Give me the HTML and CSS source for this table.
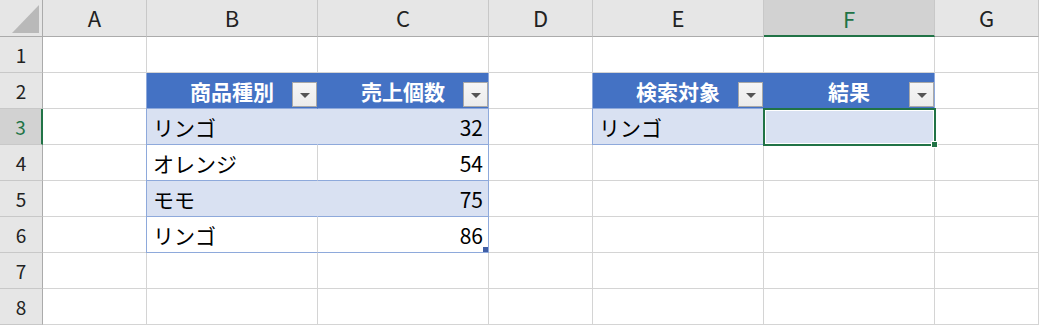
FILE: index.html
```html
<!DOCTYPE html>
<html lang="ja">
<head>
<meta charset="utf-8">
<link rel="stylesheet" href="styles.css">
</head>
<body>
<div class="sheet">
  <div class="corner"><span class="tri"></span></div>
  <div class="colhead">A</div>
  <div class="colhead">B</div>
  <div class="colhead">C</div>
  <div class="colhead">D</div>
  <div class="colhead">E</div>
  <div class="colhead sel">F</div>
  <div class="colhead">G</div>

  <div class="rowhead">1</div>
  <div class="cell"></div><div class="cell"></div><div class="cell"></div><div class="cell"></div><div class="cell"></div><div class="cell"></div><div class="cell"></div>

  <div class="rowhead">2</div>
  <div class="cell"></div>
  <div class="cell th first">商品種別<span class="filter"><span class="arrow"></span></span></div>
  <div class="cell th last">売上個数<span class="filter"><span class="arrow"></span></span></div>
  <div class="cell"></div>
  <div class="cell th first">検索対象<span class="filter"><span class="arrow"></span></span></div>
  <div class="cell th last">結果<span class="filter"><span class="arrow"></span></span></div>
  <div class="cell"></div>

  <div class="rowhead sel">3</div>
  <div class="cell"></div>
  <div class="cell td band first">リンゴ</div>
  <div class="cell td band last num">32</div>
  <div class="cell"></div>
  <div class="cell td band first">リンゴ</div>
  <div class="cell td band last active"><span class="selbox"><span class="handle"></span></span></div>
  <div class="cell"></div>

  <div class="rowhead">4</div>
  <div class="cell"></div>
  <div class="cell td first">オレンジ</div>
  <div class="cell td last num">54</div>
  <div class="cell"></div><div class="cell"></div><div class="cell"></div><div class="cell"></div>

  <div class="rowhead">5</div>
  <div class="cell"></div>
  <div class="cell td band first">モモ</div>
  <div class="cell td band last num">75</div>
  <div class="cell"></div><div class="cell"></div><div class="cell"></div><div class="cell"></div>

  <div class="rowhead">6</div>
  <div class="cell"></div>
  <div class="cell td first">リンゴ</div>
  <div class="cell td last num">86<span class="resize"></span></div>
  <div class="cell"></div><div class="cell"></div><div class="cell"></div><div class="cell"></div>

  <div class="rowhead">7</div>
  <div class="cell"></div><div class="cell"></div><div class="cell"></div><div class="cell"></div><div class="cell"></div><div class="cell"></div><div class="cell"></div>

  <div class="rowhead">8</div>
  <div class="cell"></div><div class="cell"></div><div class="cell"></div><div class="cell"></div><div class="cell"></div><div class="cell"></div><div class="cell"></div>
</div>
</body>
</html>
```

FILE: styles.css
```css
* { box-sizing: border-box; }
html, body { margin: 0; padding: 0; background: #ffffff; }
body {
  font-family: "Noto Sans CJK JP", "Noto Sans", sans-serif;
  color: #000;
  overflow: hidden;
}
.sheet {
  display: grid;
  grid-template-columns: 43px 104px 171px 171px 104px 171px 171px 104px;
  grid-template-rows: 37px repeat(8, 36px);
  width: 1039px;
}
.corner {
  background: #e6e6e6;
  border-right: 1px solid #ababab;
  border-bottom: 1px solid #ababab;
  position: relative;
}
.corner .tri {
  position: absolute;
  left: 12px;
  top: 5px;
  width: 27px;
  height: 28px;
  background: #b9b9b9;
  clip-path: polygon(100% 0, 100% 100%, 0 100%);
}
.colhead {
  background: #e6e6e6;
  border-right: 1px solid #c8c8c8;
  border-bottom: 1px solid #ababab;
  display: flex;
  align-items: center;
  justify-content: center;
  font-size: 22px;
  color: #222;
  padding-bottom: 2px;
}
.colhead.sel {
  background: #d2d2d2;
  border-bottom: 2px solid #217346;
  color: #217346;
  padding-bottom: 0;
}
.rowhead {
  background: #e6e6e6;
  border-right: 1px solid #ababab;
  border-bottom: 1px solid #c8c8c8;
  display: flex;
  align-items: center;
  justify-content: center;
  font-size: 19px;
  color: #222;
}
.rowhead.sel {
  background: #d2d2d2;
  border-right: 2px solid #217346;
  color: #217346;
}
.cell {
  border-right: 1px solid #d4d4d4;
  border-bottom: 1px solid #d4d4d4;
  position: relative;
  font-size: 21px;
  display: flex;
  align-items: center;
  white-space: nowrap;
}
.th {
  background: #4472c4;
  color: #fff;
  font-weight: bold;
  justify-content: center;
  border-right-color: #4472c4;
  border-bottom-color: #8ea9db;
}
.th.last { border-right-color: #8ea9db; }
.th.first { box-shadow: -1px 0 0 #8ea9db; }
.td {
  padding: 0 5px 0 6px;
  border-bottom-color: #8ea9db;
}
.td.first { box-shadow: -1px 0 0 #8ea9db; }
.td.last { border-right-color: #8ea9db; }
.td.band { background: #d9e1f2; }
.td.band.first { border-right-color: #d9e1f2; }
.num { justify-content: flex-end; }

.filter {
  position: absolute;
  right: 0;
  bottom: 1px;
  width: 25px;
  height: 25px;
  background: linear-gradient(#f6f6f6, #ececec);
  border: 1px solid #a8a8a8;
  display: flex;
  align-items: center;
  justify-content: center;
}
.filter .arrow {
  width: 0;
  height: 0;
  border-left: 5px solid transparent;
  border-right: 5px solid transparent;
  border-top: 5px solid #555;
  margin-top: 1px;
}
.resize {
  position: absolute;
  right: 0;
  bottom: 0;
  width: 5px;
  height: 5px;
  background: #3f5ea6;
}
.selbox {
  position: absolute;
  left: -1px;
  top: -1px;
  right: -2px;
  bottom: -2px;
  border: 2px solid #217346;
  box-shadow: inset 0 0 0 1px #ffffff;
  z-index: 2;
}
.handle {
  position: absolute;
  right: -4px;
  bottom: -4px;
  width: 7px;
  height: 7px;
  background: #217346;
  border: 1px solid #fff;
}
```
